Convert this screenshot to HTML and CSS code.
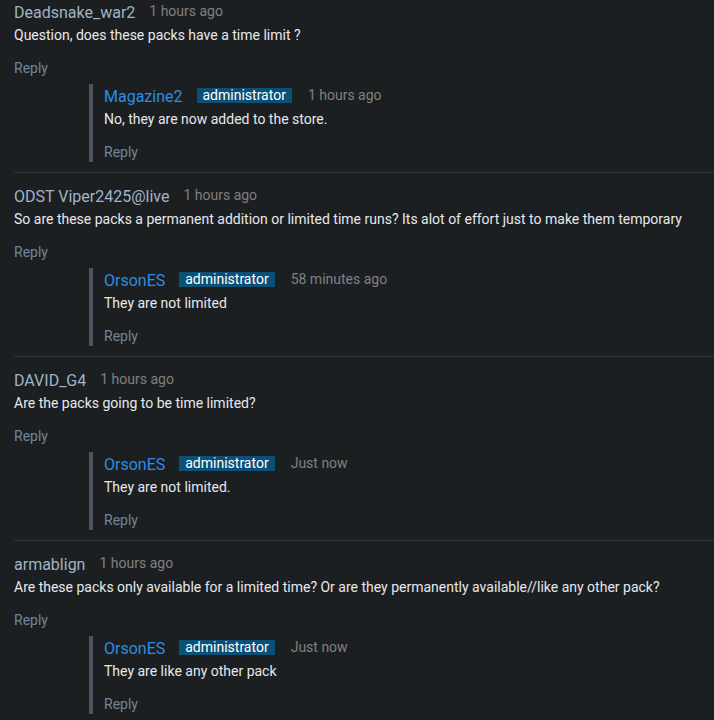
FILE: index.html
```html
<!DOCTYPE html>
<html>
<head>
<meta charset="utf-8">
<link rel="stylesheet" href="styles.css">
</head>
<body>
<div class="thread">
  <div class="comment">
    <div class="head"><span class="user">Deadsnake_war2</span><span class="time">1 hours ago</span></div>
    <div class="text">Question, does these packs have a time limit ?</div>
    <div class="reply">Reply</div>
    <div class="child">
      <div class="head"><span class="user admin">Magazine2</span><span class="badge">administrator</span><span class="time">1 hours ago</span></div>
      <div class="text">No, they are now added to the store.</div>
      <div class="reply">Reply</div>
    </div>
  </div>
  <div class="comment">
    <div class="head"><span class="user">ODST Viper2425@live</span><span class="time">1 hours ago</span></div>
    <div class="text">So are these packs a permanent addition or limited time runs? Its alot of effort just to make them temporary</div>
    <div class="reply">Reply</div>
    <div class="child">
      <div class="head"><span class="user admin">OrsonES</span><span class="badge">administrator</span><span class="time">58 minutes ago</span></div>
      <div class="text">They are not limited</div>
      <div class="reply">Reply</div>
    </div>
  </div>
  <div class="comment">
    <div class="head"><span class="user">DAVID_G4</span><span class="time">1 hours ago</span></div>
    <div class="text">Are the packs going to be time limited?</div>
    <div class="reply">Reply</div>
    <div class="child">
      <div class="head"><span class="user admin">OrsonES</span><span class="badge">administrator</span><span class="time">Just now</span></div>
      <div class="text">They are not limited.</div>
      <div class="reply">Reply</div>
    </div>
  </div>
  <div class="comment">
    <div class="head"><span class="user">armablign</span><span class="time">1 hours ago</span></div>
    <div class="text">Are these packs only available for a limited time? Or are they permanently available//like any other pack?</div>
    <div class="reply">Reply</div>
    <div class="child">
      <div class="head"><span class="user admin">OrsonES</span><span class="badge">administrator</span><span class="time">Just now</span></div>
      <div class="text">They are like any other pack</div>
      <div class="reply">Reply</div>
    </div>
  </div>
</div>
</body>
</html>
```

FILE: styles.css
```css
html, body {
  margin: 0;
  padding: 0;
  background: #1c1f22;
}
body {
  font-family: Roboto, "Liberation Sans", sans-serif;
  color: #e4e6e8;
  width: 714px;
  height: 720px;
  overflow: hidden;
}
.thread {
  padding-left: 14px;
}
.comment {
  padding-bottom: 10px;
  border-bottom: 1px solid #30363c;
}
.comment + .comment {
  margin-top: 11px;
}
.head {
  display: flex;
  align-items: flex-start;
  gap: 14px;
  height: 22px;
  padding-top: 2px;
}
.user {
  font-size: 16px;
  line-height: 22px;
  color: #9fb4c6;
}
.user.admin {
  color: #2a8ee4;
}
.time {
  font-size: 14px;
  line-height: 19px;
  color: #808080;
}
.badge {
  margin-top: 2px;
  font-size: 14px;
  line-height: 15px;
  font-weight: 400;
  color: #ffffff;
  background: #0b5076;
  padding: 0 6px;
  margin-right: 2px;
}
.text {
  font-size: 14px;
  line-height: 22px;
  color: #e6e8ea;
  white-space: nowrap;
}
.reply {
  margin-top: 12px;
  font-size: 14px;
  line-height: 20px;
  color: #6f8699;
}
.child {
  margin-top: 10px;
  margin-left: 75px;
  border-left: 4px solid #4a5662;
  padding-left: 11px;
}
.child .head {
  margin-top: -4px;
}
```
